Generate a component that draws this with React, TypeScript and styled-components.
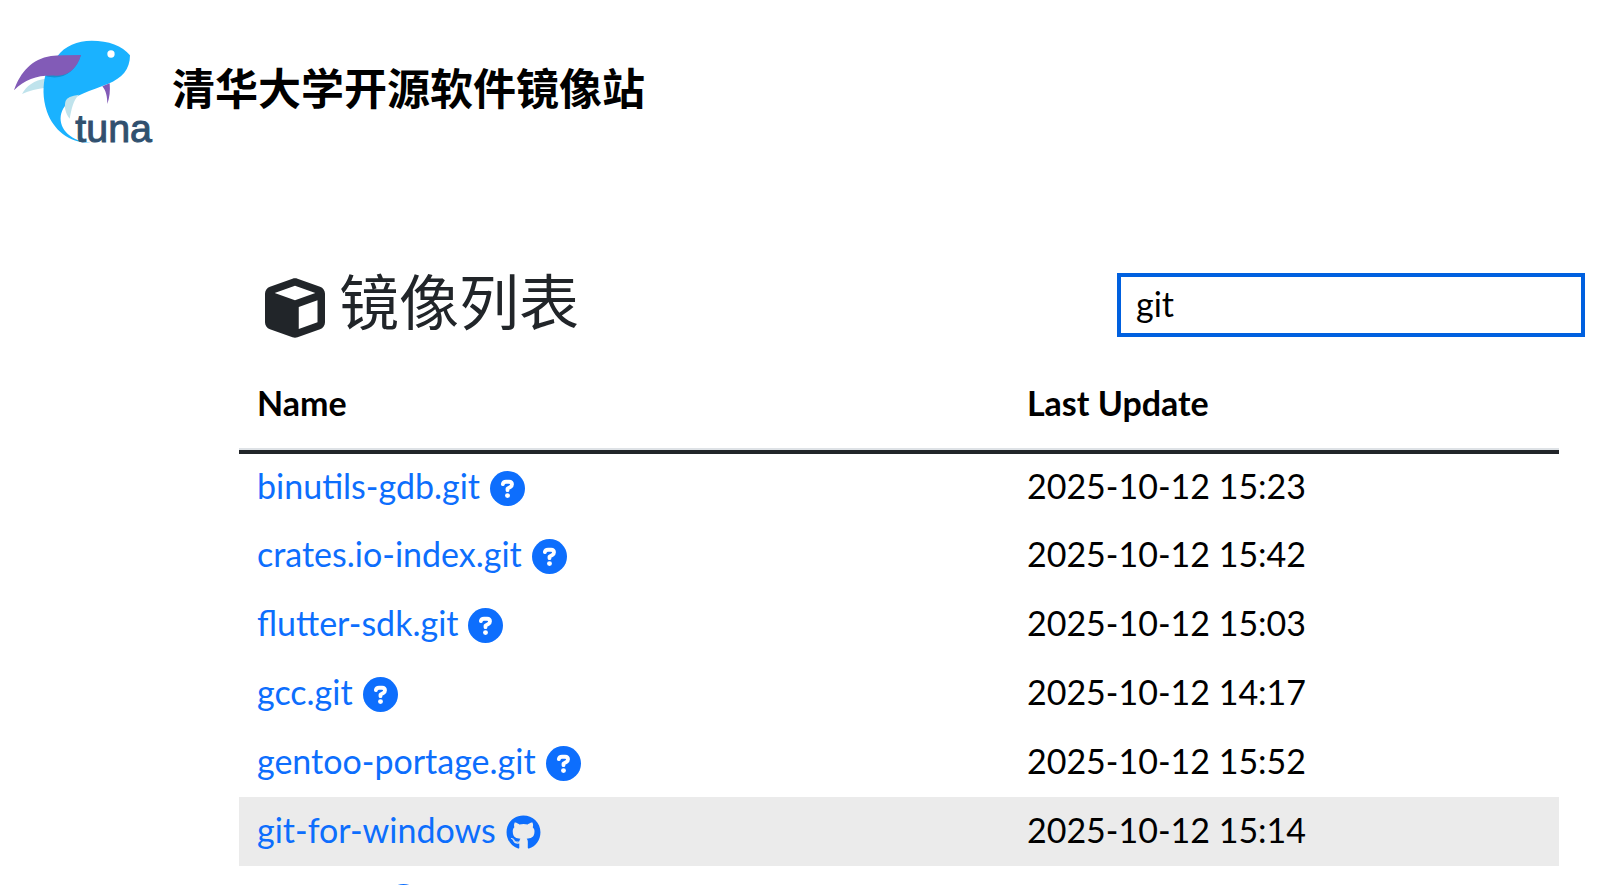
import React, { useState } from 'react';
import styled, { createGlobalStyle } from 'styled-components';
import { FaCube, FaGithub } from 'react-icons/fa6';

const GlobalStyle = createGlobalStyle`
  * { box-sizing: border-box; }
  html, body, #root { height: 100%; }
  body {
    margin: 0;
    background: #fff;
    color: #000;
    font-family: Lato, 'Noto Sans CJK SC', sans-serif;
    font-size: 34px;
    line-height: 52px;
  }
`;

const Page = styled.div`
  height: 100%;
  overflow: hidden;
`;

const Header = styled.header`
  display: flex;
  align-items: center;
  gap: 19px;
  padding: 40px 14px 0;
`;

const Logo = styled.svg`
  flex: none;
  width: 139px;
  height: 104px;
  overflow: visible;
`;

const Wordmark = styled.text`
  font-family: 'Liberation Sans', sans-serif;
  font-size: 118px;
  fill: #30506f;
  stroke: #30506f;
  stroke-width: 3px;
`;

const SiteName = styled.h1`
  margin: 0;
  padding-bottom: 6px;
  font-size: 43px;
  line-height: 64px;
  font-weight: 700;
`;

const Main = styled.main`
  padding: 120px 21px 0 213px;
`;

const ListBar = styled.div`
  display: flex;
  align-items: center;
  justify-content: space-between;
  gap: 26px;
  padding-left: 52px;
`;

const ListTitle = styled.h2`
  display: flex;
  align-items: center;
  gap: 14px;
  margin: 0;
  padding-bottom: 4px;
  color: #212529;
  font-size: 60px;
  line-height: 76px;
  font-weight: 400;

  svg { margin-top: 11px; }
`;

const Search = styled.input`
  flex: 0 1 468px;
  min-width: 0;
  height: 64px;
  margin-top: 2px;
  padding: 0 15px 4px;
  border: 4px solid #0060df;
  border-radius: 0;
  outline: none;
  background: #fff;
  color: #000;
  font: inherit;
`;

const TableWrap = styled.div`
  padding: 22px 26px 0;
`;

const Table = styled.table`
  width: 100%;
  table-layout: fixed;
  border-collapse: collapse;
`;

const HeadCell = styled.th<{ $width?: string }>`
  width: ${(p) => p.$width ?? 'auto'};
  height: 86px;
  padding: 0 18px 10px;
  text-align: left;
  font-weight: 700;
  box-shadow: inset 0 -2px 0 #dee2e6;
`;

const Body = styled.tbody`
  border-top: 4px solid #212529;
`;

const Row = styled.tr<{ $active?: boolean }>`
  background: ${(p) => (p.$active ? '#ebebeb' : 'transparent')};
`;

const Cell = styled.td`
  height: 69px;
  padding: 0 18px 4px;
  white-space: nowrap;
`;

const NameLine = styled.div`
  display: flex;
  align-items: center;
  gap: 10px;
`;

const Link = styled.a`
  color: #0d6efd;
  text-decoration: none;
`;

const IconLink = styled(Link)`
  display: flex;
  padding-top: 5px;
`;

type Mirror = { name: string; updated: string; github?: boolean; active?: boolean };

const mirrors: Mirror[] = [
  { name: 'binutils-gdb.git', updated: '2025-10-12 15:23' },
  { name: 'crates.io-index.git', updated: '2025-10-12 15:42' },
  { name: 'flutter-sdk.git', updated: '2025-10-12 15:03' },
  { name: 'gcc.git', updated: '2025-10-12 14:17' },
  { name: 'gentoo-portage.git', updated: '2025-10-12 15:52' },
  { name: 'git-for-windows', updated: '2025-10-12 15:14', github: true, active: true },
  { name: 'git-repo', updated: '' },
];

function HelpIcon() {
  return (
    <svg width="35" height="35" viewBox="0 0 512 512" aria-hidden="true">
      <circle cx="256" cy="256" r="256" fill="currentColor" />
      <path
        d="M188 192 Q194 157 234 157 H280 Q320 158 322 195 Q322 218 300 231 L256 258 V280"
        fill="none"
        stroke="#fff"
        strokeWidth="56"
        strokeLinecap="round"
        strokeLinejoin="round"
      />
      <circle cx="256" cy="360" r="36" fill="#fff" />
    </svg>
  );
}

function TunaLogo() {
  return (
    <Logo viewBox="42 31 417 312" role="img" aria-label="tuna">
      <path fill="#bfe3ec" d="M66 193 C78 169 103 151 137 147 L137 174 C111 178 88 182 66 193Z" />
      <path
        fill="#1ab2ff"
        d="M172 80 C194 49 232 33 275 33 C326 33 367 48 390 77 C390 119 366 146 325 162 C272 183 220 196 195 229 C167 266 185 313 235 332 Q252 338 272 339 C207 340 160 300 141 246 C127 205 129 166 136 137Z"
      />
      <path fill="#1490d2" d="M137 139 C185 154 226 129 243 76 L222 87 L150 130Z" />
      <path fill="#825bb7" d="M42 182 C61 127 96 88 153 79 Q185 76 243 76 C232 116 204 141 166 138 C112 136 77 148 42 182Z" />
      <circle cx="333" cy="73" r="11" fill="#fff" />
      <path fill="#825bb7" d="M307 170 L329 161 C331 183 329 204 322 223 C322 201 318 183 307 170Z" />
      <path fill="#bfe3ec" d="M237 195 C219 213 215 236 209 267 C195 249 192 229 197 213 Q202 199 237 195Z" />
      <Wordmark x="226" y="338">tuna</Wordmark>
    </Logo>
  );
}

export default function App() {
  const [query, setQuery] = useState('git');
  const shown = mirrors.filter((m) => m.name.includes(query.trim()));

  return (
    <Page>
      <GlobalStyle />
      <Header>
        <TunaLogo />
        <SiteName>清华大学开源软件镜像站</SiteName>
      </Header>
      <Main>
        <ListBar>
          <ListTitle>
            <FaCube aria-hidden="true" />
            镜像列表
          </ListTitle>
          <Search aria-label="搜索" value={query} onChange={(e) => setQuery(e.target.value)} />
        </ListBar>
        <TableWrap>
          <Table>
            <thead>
              <tr>
                <HeadCell scope="col" $width="58.33%">Name</HeadCell>
                <HeadCell scope="col">Last Update</HeadCell>
              </tr>
            </thead>
            <Body>
              {shown.map((m) => (
                <Row key={m.name} $active={m.active}>
                  <Cell>
                    <NameLine>
                      <Link href={`/${m.name}/`}>{m.name}</Link>
                      <IconLink href={`/help/${m.name}/`} aria-label={`${m.name} help`}>
                        {m.github ? <FaGithub size={35} /> : <HelpIcon />}
                      </IconLink>
                    </NameLine>
                  </Cell>
                  <Cell>{m.updated}</Cell>
                </Row>
              ))}
            </Body>
          </Table>
        </TableWrap>
      </Main>
    </Page>
  );
}
